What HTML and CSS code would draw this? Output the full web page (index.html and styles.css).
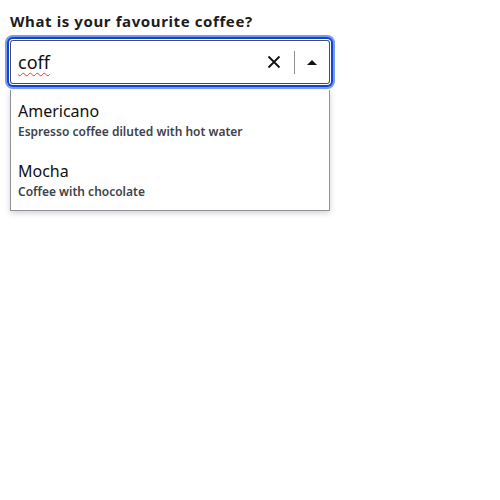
FILE: index.html
```html
<!DOCTYPE html>
<html>
<head>
<meta charset="utf-8">
<link rel="stylesheet" href="styles.css">
</head>
<body>
<div class="field">
  <label class="label" for="coffee">What is your favourite coffee?</label>
  <div class="combo">
    <div class="control">
      <span class="value"><span class="typo">coff</span></span>
      <button class="clear" aria-label="Clear">
        <svg width="14" height="14" viewBox="0 0 14 14"><path d="M1.5 1.5 L12.5 12.5 M12.5 1.5 L1.5 12.5" stroke="#111" stroke-width="1.8" fill="none"/></svg>
      </button>
      <span class="sep"></span>
      <button class="toggle" aria-label="Toggle">
        <svg width="10" height="6" viewBox="0 0 10 6"><path d="M0 6 L5 1 L10 6 Z" fill="#111"/></svg>
      </button>
    </div>
    <ul class="menu">
      <li class="option">
        <div class="opt-title">Americano</div>
        <div class="opt-desc">Espresso coffee diluted with hot water</div>
      </li>
      <li class="option">
        <div class="opt-title">Mocha</div>
        <div class="opt-desc">Coffee with chocolate</div>
      </li>
    </ul>
  </div>
</div>
</body>
</html>
```
FILE: styles.css
```css
html, body {
  margin: 0;
  padding: 0;
  background: #fff;
}
body {
  padding: 10px;
  font-family: "Noto Sans", "Open Sans", sans-serif;
  color: #111;
}
.field {
  width: 320px;
}
.label {
  display: block;
  font-size: 15px;
  font-weight: 700;
  letter-spacing: 0.6px;
  line-height: 22px;
  color: #1d1d1d;
  margin-bottom: 8px;
}
.combo {
  position: relative;
}
.control {
  height: 42px;
  border: 1px solid #4a4d55;
  border-radius: 3px;
  display: flex;
  align-items: center;
  padding-left: 7px;
  box-shadow: 0 0 0 1px #fff, 0 0 0 3px #0b46d6, 0 0 0 5px #7d9ce8;
}
.value {
  flex: 1;
  font-size: 18px;
  color: #111;
}
.typo {
  text-decoration: underline wavy #e0403a;
  text-decoration-thickness: 1px;
  text-underline-offset: 3px;
}
.clear, .toggle {
  border: 0;
  background: none;
  padding: 0;
  display: flex;
  align-items: center;
  justify-content: center;
  cursor: pointer;
}
.clear {
  width: 24px;
  height: 24px;
  margin-right: 8px;
}
.sep {
  width: 1px;
  height: 23px;
  background: #8a8d94;
}
.toggle {
  width: 34px;
  height: 24px;
}
.menu {
  list-style: none;
  margin: 6px 0 0;
  padding: 0;
  border: 1px solid #8f929a;
  border-top: 0;
  background: #fff;
  box-shadow: 0 2px 6px rgba(0,0,0,0.18);
}
.option {
  padding: 10px 7px 9px;
}
.opt-title {
  font-size: 16px;
  line-height: 22px;
  color: #111;
}
.opt-desc {
  font-size: 12px;
  line-height: 19px;
  font-weight: 600;
  color: #40434a;
}
```
